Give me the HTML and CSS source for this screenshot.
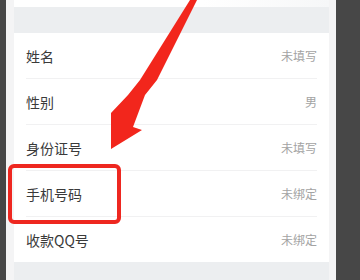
FILE: index.html
```html
<!DOCTYPE html>
<html lang="zh">
<head>
<meta charset="utf-8">
<link rel="stylesheet" href="styles.css">
</head>
<body>
<div class="screen">
  <div class="frame">
    <div class="panel">
      <div class="topbar"></div>
      <div class="gap"></div>
      <div class="card">
        <div class="row"><span class="label">姓名</span><span class="value">未填写</span></div>
        <div class="row"><span class="label">性别</span><span class="value">男</span></div>
        <div class="row"><span class="label">身份证号</span><span class="value">未填写</span></div>
        <div class="row"><span class="label">手机号码</span><span class="value">未绑定</span></div>
        <div class="row last"><span class="label">收款QQ号</span><span class="value">未绑定</span></div>
      </div>
      <div class="bottom"></div>
    </div>
  </div>
  <div class="highlight"></div>
  <svg class="arrow" width="360" height="280" viewBox="0 0 360 280">
    <polygon points="190,0 197,0 157,80 145,95 133,127 142,130 111,149 111,113 128,95 140,80" fill="#f2261c"/>
  </svg>
</div>
</body>
</html>
```
FILE: styles.css
```css
html, body {
  margin: 0;
  padding: 0;
  background: #474747;
}
.screen {
  position: relative;
  width: 360px;
  height: 280px;
  overflow: hidden;
  background: #474747;
  font-family: "Noto Sans CJK SC", "Noto Sans", sans-serif;
}
.frame {
  margin-left: 6px;
  width: 330px;
  height: 280px;
  background: #f4f4f5;
  display: flex;
  justify-content: center;
}
.panel {
  margin-left: 1px;
  width: 315px;
  height: 280px;
  background: #eceef0;
  display: flex;
  flex-direction: column;
}
.topbar {
  height: 7px;
  background: linear-gradient(90deg, #ffffff 60%, #f6f7f8 100%);
}
.gap {
  height: 26px;
  background: #eceef0;
}
.card {
  background: #ffffff;
  display: flex;
  flex-direction: column;
}
.row {
  height: 45px;
  margin-left: 12px;
  margin-right: 12px;
  border-bottom: 1px solid #f1f1f2;
  display: flex;
  align-items: center;
  justify-content: space-between;
}
.row.last {
  border-bottom: none;
  height: 45px;
}
.label {
  font-size: 14px;
  color: #3a3a3a;
}
.value {
  font-size: 12px;
  color: #a3a3a3;
}
.bottom {
  flex: 1;
  background: #eceef0;
}
.highlight {
  position: absolute;
  left: 8px;
  top: 164px;
  width: 105px;
  height: 52px;
  border: 4.5px solid #ee2720;
  border-radius: 6px;
}
.arrow {
  position: absolute;
  left: 0;
  top: 0;
}
```
